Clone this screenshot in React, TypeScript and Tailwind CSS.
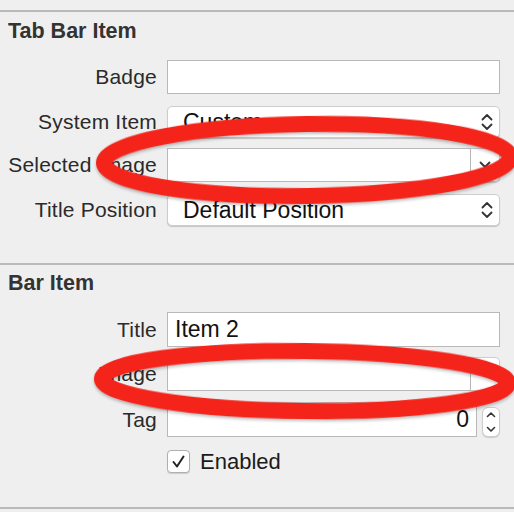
import React from "react";

function UpDown({ small }: { small?: boolean }) {
  if (small) {
    return (
      <svg width="10" height="24" viewBox="0 0 10 24" fill="none" stroke="#333" strokeWidth="1.6" strokeLinecap="round" strokeLinejoin="round">
        <path d="M1.5 6.5 L5 3 L8.5 6.5" />
        <path d="M1.5 17.5 L5 21 L8.5 17.5" />
      </svg>
    );
  }
  return (
    <svg width="12" height="20" viewBox="0 0 12 20" fill="none" stroke="#333" strokeWidth="1.8" strokeLinecap="round" strokeLinejoin="round">
      <path d="M1.5 7.5 L6 3 L10.5 7.5" />
      <path d="M1.5 12.5 L6 17 L10.5 12.5" />
    </svg>
  );
}

function Row({ label, h, mt, children }: { label: string; h: string; mt: string; children: React.ReactNode }) {
  return (
    <div className={`flex items-center ${h} ${mt}`}>
      <div className="w-[157px] shrink-0 text-right text-[21px] leading-[24px] tracking-[0.2px] text-[#2a2a2a]">{label}</div>
      <div className="ml-[10px] flex h-full w-[333px]">{children}</div>
    </div>
  );
}

function TextField({ value, right }: { value?: string; right?: boolean }) {
  return (
    <div
      className={`flex h-full flex-1 items-center border border-[#b9b9b9] bg-white px-[7px] text-[23px] text-[#111] ${
        right ? "justify-end" : ""
      }`}
    >
      {value}
    </div>
  );
}

function Popup({ value }: { value: string }) {
  return (
    <div className="flex h-full flex-1 items-center justify-between rounded-[5px] border border-[#cdcdcd] bg-white pl-[15px] pr-[6px] text-[23px] text-[#111] shadow-[0_1px_1px_rgba(0,0,0,0.18)]">
      <span>{value}</span>
      <UpDown />
    </div>
  );
}

function Combo() {
  return (
    <div className="flex h-full flex-1">
      <div className="h-full flex-1 border border-[#b9b9b9] bg-white" />
      <div className="flex h-full w-[29px] items-center justify-center rounded-r-[5px] border border-l-0 border-[#cdcdcd] bg-white shadow-[0_1px_1px_rgba(0,0,0,0.15)]">
        <svg width="12" height="8" viewBox="0 0 12 8" fill="none" stroke="#333" strokeWidth="1.8" strokeLinecap="round" strokeLinejoin="round">
          <path d="M1.5 1.5 L6 6 L10.5 1.5" />
        </svg>
      </div>
    </div>
  );
}

export default function App() {
  return (
    <div className="relative h-[512px] w-[514px] overflow-hidden bg-[#efefef] font-['Liberation_Sans',Arial,sans-serif]">
      <div className="pt-[10px]">
        <div className="h-[2px] bg-[#bababa]" />

        <div className="ml-[8px] mt-[7px] h-[24px] text-[21.5px] font-bold leading-[24px] text-[#333]">Tab Bar Item</div>
        <Row label="Badge" h="h-[34px]" mt="mt-[17px]">
          <TextField />
        </Row>
        <Row label="System Item" h="h-[32px]" mt="mt-[12px]">
          <Popup value="Custom" />
        </Row>
        <Row label="Selected Image" h="h-[34px]" mt="mt-[10px]">
          <Combo />
        </Row>
        <Row label="Title Position" h="h-[32px]" mt="mt-[12px]">
          <Popup value="Default Position" />
        </Row>

        <div className="mt-[37px] h-[2px] bg-[#bababa]" />

        <div className="ml-[8px] mt-[6px] h-[24px] text-[21.5px] font-bold leading-[24px] text-[#333]">Bar Item</div>
        <Row label="Title" h="h-[35px]" mt="mt-[17px]">
          <TextField value="Item 2" />
        </Row>
        <Row label="Image" h="h-[34px]" mt="mt-[10px]">
          <Combo />
        </Row>
        <Row label="Tag" h="h-[35px]" mt="mt-[11px]">
          <TextField value="0" right />
          <div className="ml-[5px] mt-[5px] flex h-[30px] w-[18px] items-center justify-center rounded-[6px] border border-[#cdcdcd] bg-white shadow-[0_1px_1px_rgba(0,0,0,0.15)]">
            <UpDown small />
          </div>
        </Row>
        <div className="mt-[13px] flex h-[23px] items-center pl-[167px]">
          <div className="flex h-[23px] w-[23px] items-center justify-center rounded-[4px] border border-[#b0b0b0] bg-white shadow-[0_1px_1px_rgba(0,0,0,0.15)]">
            <svg width="15" height="15" viewBox="0 0 15 15" fill="none" stroke="#222" strokeWidth="2" strokeLinecap="round" strokeLinejoin="round">
              <path d="M2.5 8 L6 12.5 L12.5 2.5" />
            </svg>
          </div>
          <span className="ml-[10px] text-[22px] leading-[24px] text-[#1a1a1a]">Enabled</span>
        </div>

        <div className="mt-[34px] h-[2px] bg-[#bababa]" />
      </div>

      <svg className="pointer-events-none absolute left-0 top-0" width="514" height="512" viewBox="0 0 514 512" fill="none">
        <g stroke="#f5241a" strokeWidth="16" style={{ filter: "drop-shadow(0 2px 1.5px rgba(0,0,0,0.25))" }}>
          <ellipse cx="307" cy="160" rx="203" ry="36" transform="rotate(-0.8 307 160)" />
          <ellipse cx="305" cy="381" rx="203" ry="30" transform="rotate(0.6 305 381)" />
        </g>
      </svg>
    </div>
  );
}
